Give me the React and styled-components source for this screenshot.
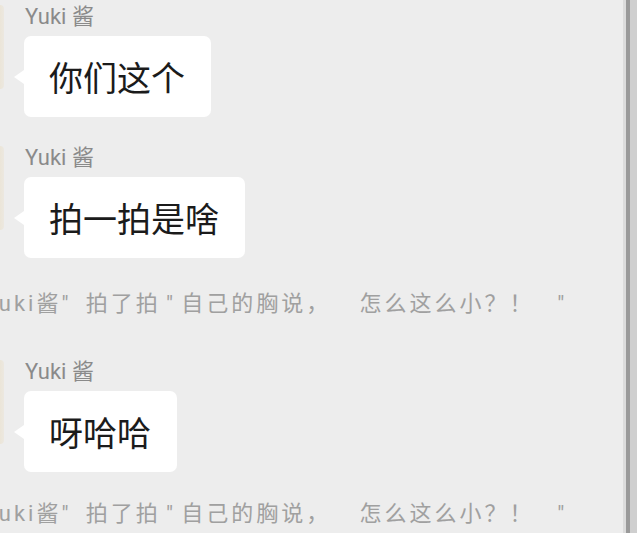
import React from "react";
import styled, { createGlobalStyle } from "styled-components";

const GlobalStyle = createGlobalStyle`
  html, body {
    margin: 0;
    padding: 0;
    background: #ededed;
  }
  body {
    font-family: Roboto, "Noto Sans CJK SC", sans-serif;
  }
`;

const StyledScreen = styled.div`
  display: flex;
  width: 637px;
  height: 533px;
  overflow: hidden;
  background: #ededed;
`;

const StyledChat = styled.div`
  flex: 1;
  display: flex;
  flex-direction: column;
  padding-top: 4px;
  overflow: hidden;
`;

const StyledEdge = styled.div`
  display: flex;
  width: 11px;
  flex-shrink: 0;
  background: #cfcfcf;
  border-left: 3px solid #dcdcdc;
  .thumb {
    width: 4px;
    background: #9a9a9a;
  }
`;

const StyledMessage = styled.div`
  display: flex;
  align-items: flex-start;
  gap: 20px;
  margin-top: ${(p) => p.gap}px;
`;

const StyledAvatar = styled.div`
  flex-shrink: 0;
  width: 80px;
  height: 84px;
  margin-left: -76px;
  margin-top: 1px;
  border-radius: 4px;
  background: linear-gradient(90deg, #ece9e3 0%, #ebe5d8 95%, #ece8e0 100%);
`;

const StyledBody = styled.div`
  display: flex;
  flex-direction: column;
  align-items: flex-start;
  gap: 6px;
  .name {
    margin-left: 1px;
    font-size: 22px;
    line-height: 26px;
    color: #8a8a8a;
  }
`;

const StyledBubble = styled.div`
  position: relative;
  padding: 20px 26px 20px 25px;
  background: #ffffff;
  border-radius: 7px;
  font-family: "Noto Sans CJK SC", sans-serif;
  font-size: 34px;
  line-height: 41px;
  color: #1b1b1b;
  white-space: nowrap;
  &::before {
    content: "";
    position: absolute;
    left: -10px;
    top: 34px;
    border-top: 7px solid transparent;
    border-bottom: 7px solid transparent;
    border-right: 10px solid #ffffff;
  }
`;

const StyledNote = styled.div`
  margin-top: ${(p) => p.gap}px;
  margin-left: -27px;
  font-size: 22px;
  line-height: 30px;
  letter-spacing: 3px;
  color: #a0a0a0;
  white-space: pre;
`;

const Message = ({ gap, name, text }) => (
  <StyledMessage gap={gap}>
    <StyledAvatar />
    <StyledBody>
      <span className="name">{name}</span>
      <StyledBubble>{text}</StyledBubble>
    </StyledBody>
  </StyledMessage>
);

// spacing inside the note is tuned with unicode spaces to match the capture
const note =
  '"Yuki酱"\u2002拍了拍\u200A"\u200A自己的胸说，\u3000\u2002怎么这么小？！\u2002 "';

const App = () => {
  return (
    <>
      <GlobalStyle />
      <StyledScreen>
        <StyledChat>
          <Message gap={0} name="Yuki 酱" text="你们这个" />
          <Message gap={28} name="Yuki 酱" text="拍一拍是啥" />
          <StyledNote gap={31}>{note}</StyledNote>
          <Message gap={40} name="Yuki 酱" text="呀哈哈" />
          <StyledNote gap={27}>{note}</StyledNote>
        </StyledChat>
        <StyledEdge>
          <div className="thumb" />
        </StyledEdge>
      </StyledScreen>
    </>
  );
};

export default App;
